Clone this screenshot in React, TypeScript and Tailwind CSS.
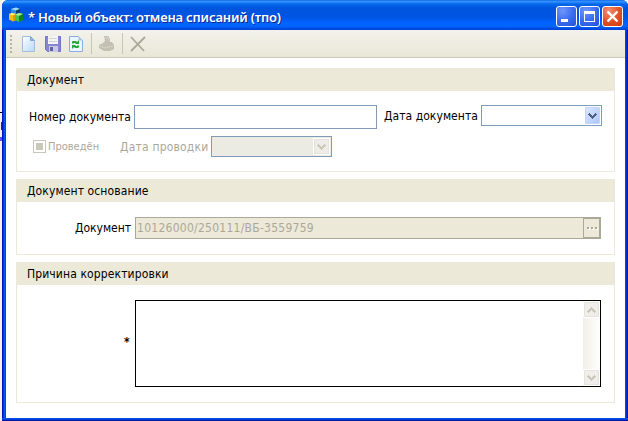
import type { ReactNode } from 'react';

const uiFont = "font-['DejaVu_Sans_Condensed','DejaVu_Sans',sans-serif] [font-stretch:condensed]";

function Group({ title, className, children }: { title: string; className: string; children: ReactNode }) {
  return (
    <section className={`border border-[#ece9d8] ${className}`}>
      <h2 className="flex h-[22px] items-center bg-[#ece9d8] pl-[10px] text-[12px] leading-none tracking-[0.12px]">
        <span>{title}</span>
      </h2>
      {children}
    </section>
  );
}

function Chevron({ color, up = false }: { color: string; up?: boolean }) {
  return (
    <svg width="9" height="6" viewBox="0 0 9 6" className={up ? 'rotate-180' : ''} shapeRendering="crispEdges">
      <path d="M1 0h1v1H1zM7 0h1v1H7zM0 1h3v1H0zM6 1h3v1H6zM1 2h3v1H1zM5 2h3v1H5zM2 3h5v1H2zM3 4h3v1H3zM4 5h1v1H4z" fill={color} />
    </svg>
  );
}

function Combo({ disabled = false }: { disabled?: boolean }) {
  return (
    <div className={`flex h-[21px] w-[121px] justify-end border border-[#7f9db9] p-px ${disabled ? 'bg-[#ebebe4]' : 'bg-white'}`}>
      <button
        className={`flex items-center justify-center border ${
          disabled
            ? 'w-[17px] border-white bg-[#edece6] shadow-[inset_0_0_0_1px_#e4e3db]'
            : 'w-[15px] rounded-[1px] border-[#c3d3fd] bg-linear-to-br from-[#dbe6ff] to-[#adc6f7]'
        }`}
      >
        <Chevron color={disabled ? '#c9c7ba' : '#4d6185'} />
      </button>
    </div>
  );
}

function ScrollButton({ up = false }: { up?: boolean }) {
  return (
    <button className="flex h-[17px] w-[17px] items-center justify-center rounded-[2px] border border-white bg-[#efeee8] shadow-[inset_0_0_0_1px_#e5e4dc]">
      <Chevron color="#c9c7ba" up={up} />
    </button>
  );
}

function AppIcon() {
  return (
    <svg width="16" height="16" viewBox="0 0 16 16">
      <path d="M3 2l5-1.500L12 2v6l-4 2-5-2z" fill="#2f8be6" />
      <path d="M3 2l5-1.500L12 2 8 3.500z" fill="#9bdcff" />
      <path d="M8 3.500L12 2v6l-4 2z" fill="#103c78" />
      <path d="M1 7l3-1 4 1v6l-3 1.500-4-2z" fill="#f5bc18" />
      <path d="M1 7l3-1 4 1-3 1.500z" fill="#fff08a" />
      <path d="M5 8.500L8 7v6l-3 1.500z" fill="#d99a0c" />
      <path d="M7 7.500L11 6l4 1v6l-4 2-4-2z" fill="#4cc447" />
      <path d="M7 7.500L11 6l4 1-4 2z" fill="#a7ee86" />
      <path d="M11 9l4-2v6l-4 2z" fill="#138225" />
    </svg>
  );
}

function NewIcon() {
  return (
    <svg width="16" height="18" viewBox="0 0 16 18">
      <defs>
        <linearGradient id="page" x2="1" y2="1">
          <stop stopColor="#fff" />
          <stop offset="1" stopColor="#b6daf8" />
        </linearGradient>
      </defs>
      <path d="M1.500 1.500h8l4 4v11h-12z" fill="url(#page)" stroke="#a3bcdc" />
      <path d="M9.500 1.500v4h4z" fill="#8fbae8" stroke="#7ea8d8" />
    </svg>
  );
}

function SaveIcon() {
  return (
    <svg width="16" height="16" viewBox="0 0 16 16">
      <path d="M.5.5h15v15h-13l-2-2z" fill="#8585d4" stroke="#7474c2" />
      <path d="M3 0h10v8H3z" fill="#f4f4f5" />
      <path d="M4 2.500h8M4 5.500h8" stroke="#d5d5d8" />
      <path d="M4 10h9v6H4z" fill="#c9c9de" />
      <path d="M5 11h3v4H5z" fill="#6060ae" />
    </svg>
  );
}

function RefreshIcon() {
  return (
    <svg width="14" height="16" viewBox="0 0 14 16">
      <path d="M.5.5h9l4 4v11H.5z" fill="#eaf5ff" stroke="#8cabe0" />
      <path d="M10 1v3h3z" fill="#bad5f2" stroke="#a3bfe6" />
      <path d="M3 7.500V6q0-1 1-1h3l1 1 2-2v4H6l1-1H5v.5z" fill="#24a83c" />
      <path d="M10 9.500h-2v.5H6l1-1H3v4l2-2 1 1h2q2 0 2-1z" fill="#24a83c" />
    </svg>
  );
}

function PrintIcon() {
  return (
    <svg width="16" height="16" viewBox="0 0 16 16">
      <path d="M5 0h4l2 3v3h2l2 3v4l-4 2H5l-5-3V9l4-2 2-2z" fill="#c3c0b2" />
      <path d="M6 2h3l1 3M1 10l5 2 8-2" fill="none" stroke="#d8d5c8" />
    </svg>
  );
}

const captionButton = 'flex h-[21px] w-[21px] items-center justify-center rounded-[3px] border border-white';
const blueButton = 'bg-[radial-gradient(circle_at_30%_20%,#6f96fb,#3c6df0_50%,#1f50d8)]';

export default function App() {
  return (
    <div className={`flex h-[421px] w-[628px] overflow-hidden bg-white text-[12px] leading-none text-black ${uiFont}`}>
      <div className="flex w-[2px] shrink-0 flex-col bg-[#f4f2e8]">
        <div className="mt-[112px] h-px bg-black" />
        <div className="mt-[9px] h-[8px] w-px self-end bg-[#303030]" />
        <div className="mt-[7px] h-[4px] bg-[#5757d5]" />
      </div>
      <main className="flex w-[626px] flex-col overflow-hidden rounded-t-[6px] bg-[linear-gradient(90deg,#0014c7_0_1px,#0831d9_1px_2px,#005bed_2px_3px,#0046e3_3px_4px,#0046e3_624px,#0019b5_625px)]">
        <header className="flex h-[30px] shrink-0 items-center bg-[linear-gradient(180deg,#0058e6_0,#3a93ff_1px,#288eff_2px,#0568ed_4px,#0055dd_8px,#0054e3_17px,#0061fc_22px,#0066ff_26px,#0054e8_28px,#003dd7_30px)] pl-[6px] pr-[5px]">
          <AppIcon />
          <h1 className="mt-[4px] ml-[4px] flex-1 whitespace-nowrap font-['Noto_Sans',sans-serif] text-[13px] font-semibold leading-none tracking-[-0.19px] text-white [text-shadow:1px_1px_#08298e]">
            * Новый объект: отмена списаний (тпо)
          </h1>
          <div className="mt-[3px] flex gap-[2px]">
            <button className={`${captionButton} ${blueButton}`}>
              <span className="mt-[8px] mr-[4px] h-[3px] w-[7px] bg-white" />
            </button>
            <button className={`${captionButton} ${blueButton}`}>
              <span className="h-[11px] w-[11px] border border-t-[3px] border-white" />
            </button>
            <button className={`${captionButton} bg-[radial-gradient(circle_at_30%_20%,#f09070,#e04f25_55%,#c8400f)]`}>
              <svg width="11" height="11" viewBox="0 0 11 11">
                <path d="M.5.5l10 10M10.500.5l-10 10" stroke="white" strokeWidth="2.300" />
              </svg>
            </button>
          </div>
        </header>

        <div className="ml-[4px] flex h-[388px] w-[619px] flex-col bg-white">
          <nav className="flex h-[28px] shrink-0 items-center border-b border-[#cbc8b7] bg-linear-to-b from-[#f3f2ec] to-[#e9e7d6] pl-[4px]">
            <div className="mr-[9px] flex flex-col gap-[2px]">
              {[0, 1, 2, 3, 4].map((dot) => (
                <span key={dot} className="h-[2px] w-[2px] bg-[#b5b3a6]" />
              ))}
            </div>
            <NewIcon />
            <span className="ml-[8px]"><SaveIcon /></span>
            <span className="ml-[8px]"><RefreshIcon /></span>
            <span className="ml-[8px] h-[21px] w-px bg-[#c8c5b2]" />
            <span className="ml-[7px]"><PrintIcon /></span>
            <span className="ml-[7px] h-[21px] w-px bg-[#c8c5b2]" />
            <svg className="ml-[7px]" width="16" height="16" viewBox="0 0 16 16">
              <path d="M1 1l13 14M15 1L1 15" stroke="#aaa89a" strokeWidth="1.800" />
            </svg>
          </nav>

          <div className="flex flex-col gap-[7px] pt-[10px] pl-[10px]">
            <Group title="Документ" className="h-[104px] w-[599px]">
              <div className="flex h-[38px] items-start pt-[14px] pl-[12px]">
                <label className="w-[105px] pt-[6px] whitespace-nowrap tracking-[0.03px]">Номер документа</label>
                <input className="h-[24px] w-[243px] border border-[#7f9db9] bg-white" />
                <label className="ml-[7px] w-[97px] pt-[5px] whitespace-nowrap tracking-[0.06px]">Дата документа</label>
                <Combo />
              </div>
              <div className="flex items-start pt-[7px] pl-[16px] text-[#aca899]">
                <span className="mt-[4px] flex h-[13px] w-[13px] items-center justify-center border border-[#cac8bb]">
                  <span className="h-[7px] w-[7px] bg-[#cac8bb]" />
                </span>
                <label className="ml-[2px] w-[72px] pt-[5px] whitespace-nowrap text-[11px]">Проведён</label>
                <label className="w-[91px] pt-[5px] whitespace-nowrap tracking-[0.2px]">Дата проводки</label>
                <Combo disabled />
              </div>
            </Group>

            <Group title="Документ основание" className="h-[76px] w-[599px]">
              <div className="flex items-start pt-[15px] pl-[58px]">
                <label className="w-[60px] pt-[5px] whitespace-nowrap">Документ</label>
                <div className="flex h-[22px] w-[466px] border border-[#aca899] bg-[#ece9d8] text-[#aca899]">
                  <span className="flex-1 pt-[4px] pl-px whitespace-nowrap tracking-[0.26px]">10126000/250111/ВБ-3559759</span>
                  <button className="flex w-[17px] items-center justify-center gap-[2px] border border-[#aca899]">
                    {[0, 1, 2].map((dot) => (
                      <span key={dot} className="h-[2px] w-[2px] bg-[#aca899] shadow-[1px_1px_white]" />
                    ))}
                  </button>
                </div>
              </div>
            </Group>

            <Group title="Причина корректировки" className="h-[141px] w-[599px]">
              <div className="flex items-start pt-[15px] pl-[107px]">
                <label className="w-[11px] pt-[36px] font-bold">*</label>
                <div className="flex h-[87px] w-[466px] border border-black bg-white">
                  <textarea className="min-w-0 flex-1 resize-none bg-white" />
                  <div className="flex w-[17px] flex-col justify-between bg-linear-to-r from-[#f1f0ea] to-[#fefefb]">
                    <ScrollButton up />
                    <ScrollButton />
                  </div>
                </div>
              </div>
            </Group>
          </div>
        </div>
        <div className="h-[3px] shrink-0 bg-[linear-gradient(180deg,#004fe6_0_1px,#0038db_1px_2px,#0019a5_2px)]" />
      </main>
    </div>
  );
}
